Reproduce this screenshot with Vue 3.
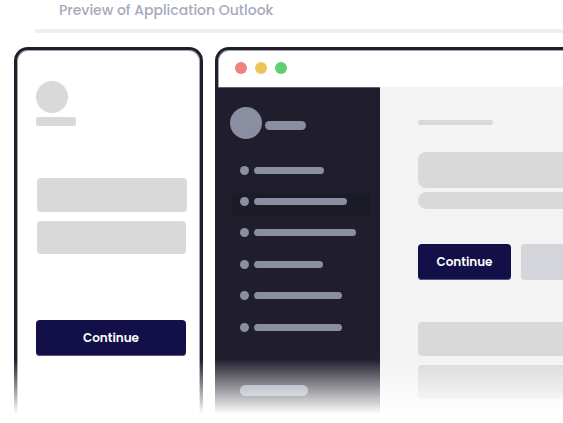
<script setup>
const menu = [
  { width: 70 },
  { width: 93, active: true },
  { width: 102 },
  { width: 69 },
  { width: 88 },
  { width: 88 },
]
const lights = ['red', 'yellow', 'green']
</script>

<template>
  <main class="page">
    <h1 class="title"><span>Preview of Application Outlook</span></h1>
    <div class="rule"></div>
    <div class="previews">
      <section class="phone">
        <div class="phone-avatar"></div>
        <div class="phone-name"></div>
        <div class="field first"></div>
        <div class="field second"></div>
        <button class="button wide"><span>Continue</span></button>
      </section>
      <section class="browser">
        <header class="bar">
          <i v-for="c in lights" :key="c" class="light" :class="c"></i>
        </header>
        <div class="body">
          <aside class="side">
            <div class="profile">
              <div class="avatar"></div>
              <div class="name"></div>
            </div>
            <nav class="menu">
              <div v-for="(m, i) in menu" :key="i" class="item" :class="{ active: m.active }">
                <i class="dot"></i>
                <i class="line" :style="{ width: m.width + 'px' }"></i>
              </div>
            </nav>
            <div class="foot"></div>
          </aside>
          <div class="content">
            <div class="crumb"></div>
            <div class="block tall"></div>
            <div class="block short"></div>
            <div class="actions">
              <button class="button"><span>Continue</span></button>
              <div class="ghost"></div>
            </div>
            <div class="card"></div>
            <div class="card next"></div>
          </div>
        </div>
      </section>
    </div>
    <div class="fade"></div>
  </main>
</template>

<style>
body {
  margin: 0;
  overflow: hidden;
  background: #fff;
}
</style>

<style scoped>
* {
  box-sizing: border-box;
}
.page {
  position: relative;
  width: 563px;
  height: 423px;
  overflow: hidden;
  background: #fff;
  font-family: Poppins, Inter, "Liberation Sans", sans-serif;
}
.title {
  margin: 0;
  height: 29px;
  padding-left: 59px;
  font-size: 14px;
  font-weight: 500;
  line-height: 20px;
  color: #a6a9bd;
  white-space: nowrap;
}
.rule {
  height: 4px;
  margin-left: 35px;
  background: #eef1f4;
}
.previews {
  display: flex;
  gap: 12px;
  margin-top: 14px;
  padding-left: 14px;
}
.phone {
  flex: none;
  width: 189px;
  height: 367px;
  padding: 31px 0 0 19px;
  border: solid #201e2c;
  border-width: 3px 3px 0;
  border-radius: 14px 14px 0 0;
  box-shadow: inset 0 0 0 1px #a6a5ab;
  background: #fff;
}
.phone-avatar {
  width: 32px;
  height: 32px;
  border-radius: 50%;
  background: #d9d9d9;
}
.phone-name {
  width: 40.4px;
  height: 9px;
  margin-top: 4px;
  border-radius: 2px;
  background: #d9d9d9;
}
.field {
  margin-left: 1px;
  border-radius: 4px;
  background: #d9d9d9;
}
.field.first {
  width: 150px;
  height: 34px;
  margin-top: 52px;
}
.field.second {
  width: 149px;
  height: 33px;
  margin-top: 9px;
}
.button {
  display: flex;
  align-items: center;
  justify-content: center;
  width: 93px;
  height: 36px;
  padding: 0;
  border: 0;
  border-radius: 4px;
  box-shadow: inset 0 -1px #5a5780;
  background: #130f49;
  color: #fff;
  font-family: inherit;
  font-size: 12px;
  font-weight: 600;
  line-height: 18px;
}
.button.wide {
  width: 150px;
  margin-top: 66px;
}
.browser {
  flex: none;
  width: 400px;
  height: 367px;
  border: solid #201e2c;
  border-width: 3px 0 0 3px;
  border-radius: 14px 0 0 0;
  box-shadow: inset 0 0 0 1px #a6a5ab;
  background: #fff;
}
.bar {
  display: flex;
  align-items: center;
  gap: 8px;
  height: 37px;
  padding: 0 0 1px 17px;
}
.light {
  width: 12px;
  height: 12px;
  border-radius: 50%;
}
.red {
  background: #f0827d;
}
.yellow {
  background: #efc456;
}
.green {
  background: #5dd171;
}
.body {
  display: flex;
  height: 327px;
}
.side {
  flex: none;
  width: 162px;
  padding-top: 20px;
  box-shadow: inset 0 1px #62616a;
  background: #201e2c;
}
.profile {
  display: flex;
  gap: 3px;
  padding-left: 12px;
}
.avatar {
  width: 32px;
  height: 32px;
  border-radius: 50%;
  background: #898ea1;
}
.name {
  width: 41px;
  height: 9px;
  margin-top: 14px;
  border-radius: 5px;
  background: #898ea1;
}
.menu {
  display: grid;
  gap: 8.4px;
  margin-top: 19.6px;
}
.item {
  position: relative;
  display: flex;
  align-items: center;
  gap: 5px;
  width: 139px;
  height: 23px;
  margin-left: 14px;
  padding-left: 8px;
}
.item.active::before {
  content: "";
  position: absolute;
  inset: 3px 0 -3px;
  border-radius: 4px;
  background: #1b1b26;
}
.dot {
  position: relative;
  width: 9px;
  height: 9px;
  border-radius: 50%;
  background: #898ea1;
}
.line {
  position: relative;
  height: 7px;
  border-radius: 4px;
  background: #898ea1;
}
.foot {
  width: 68px;
  height: 11px;
  margin: 46.5px 0 0 22px;
  border-radius: 6px;
  background: #898ea1;
}
.content {
  flex: 1;
  padding: 33px 0 0 38px;
  background: #f3f3f3;
  overflow: hidden;
}
.crumb {
  width: 75px;
  height: 5px;
  border-radius: 3px;
  background: #d9d9d9;
}
.block {
  width: 220px;
  background: #d9d9d9;
}
.block.tall {
  height: 36px;
  margin-top: 27px;
  border-radius: 8px;
}
.block.short {
  height: 17px;
  margin-top: 4px;
  border-radius: 8.5px;
}
.actions {
  display: flex;
  gap: 10px;
  margin-top: 35px;
}
.ghost {
  width: 93px;
  height: 36px;
  border-radius: 4px;
  background: #d4d5db;
}
.card {
  width: 220px;
  height: 34px;
  margin-top: 42px;
  border-radius: 4px;
  background: #d9d9d9;
}
.card.next {
  margin-top: 9px;
}
.fade {
  position: absolute;
  left: 0;
  right: 0;
  top: 359px;
  height: 64px;
  background: linear-gradient(rgba(255, 255, 255, 0), #fff 55px);
}
</style>
